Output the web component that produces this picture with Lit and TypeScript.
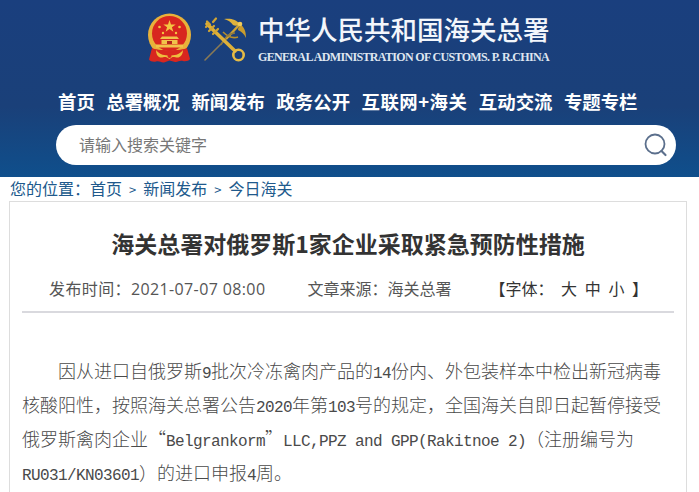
import { LitElement, html, css, svg } from "lit";
import { customElement } from "lit/decorators.js";

const emblem = svg`
<svg class="emblem" width="46" height="50" viewBox="0 0 46 50" aria-hidden="true">
  <circle cx="22.500" cy="22" r="21.500" fill="#e8b13a"/>
  <circle cx="22.500" cy="20.500" r="17.500" fill="#d8261f"/>
  <path d="M22.500 7l1.500 4.500h4.700l-3.800 2.800 1.500 4.500-3.900-2.800-3.900 2.800 1.500-4.500-3.800-2.800h4.700z" fill="#f4c542"/>
  <circle cx="12.500" cy="14" r="1.300" fill="#f4c542"/><circle cx="32.500" cy="14" r="1.300" fill="#f4c542"/>
  <circle cx="16" cy="20" r="1.200" fill="#f4c542"/><circle cx="29" cy="20" r="1.200" fill="#f4c542"/>
  <path d="M13 26h19l-2-2.600H15zM14.500 27h16v4h-16zM9 31.500h27v3H9z" fill="#f1c24a"/>
  <path d="M20 28h5v3h-5z" fill="#b4241c"/>
  <path d="M5 35c5 3 30 3 35 0l3 11c-1 2-4.500 2.500-7 2-4-.8-5 1.500-8 1l-5.500-1.500L17 49.500c-3 .5-4-1.800-8-1-2.500.5-6 0-7-2z" fill="#d8261f"/>
  <path d="M9 37c4 5 9 5.500 13.500 5.500S32 42 36 37c0 4-2 6.500-4.500 7.500-2.500.5-4-1-6-.5L22.500 46 19 44c-2-.5-3.500 1-6 .5C10.500 43.500 9 41 9 37z" fill="#eebc3e"/>
  <circle cx="22.500" cy="43" r="2" fill="#d8261f"/>
</svg>`;

const customs = svg`
<svg class="customs" width="46" height="46" viewBox="0 0 46 46" aria-hidden="true">
  <path d="M2 44L23 23" stroke="#8a7a55" stroke-width="1.600" stroke-linecap="round"/>
  <path d="M23 23L37 8" stroke="#cfa334" stroke-width="2.500"/>
  <path d="M20 16c4 4 9 7 15 5" fill="none" stroke="#b98f2a" stroke-width="1.500"/>
  <path d="M18 29c2-6 8-12 14-12" fill="none" stroke="#8f7a40" stroke-width="1.500"/>
  <path d="M37 8C33 3 27 2 21 3c4 1 7 3 9 6 2 1 5 1 7-1z" fill="#e0b23c"/>
  <path d="M38 9c3 2 5 6 5 13-2-4-4-6-8-8 0-2 1-4 3-5z" fill="#c99c2e"/>
  <circle cx="37" cy="8" r="2.300" fill="#f0ca5a"/>
  <path d="M4 8L32 35" stroke="#deb03a" stroke-width="3.600" stroke-linecap="round"/>
  <path d="M3 11l3-3M7 8.500l-3-3M6 15l5-5M10 18l5-5M10 6l3-3.500" stroke="#d3a533" stroke-width="2.200" stroke-linecap="round"/>
  <circle cx="35.500" cy="39" r="5.200" fill="none" stroke="#e6bb45" stroke-width="2.600"/>
</svg>`;

@customElement("app-root")
export class AppRoot extends LitElement {
  static styles = css`
    :host { display: block; width: 699px; height: 492px; overflow: hidden; background: #fff;
      font-family: "Noto Sans CJK SC", "Noto Sans", sans-serif; }
    .top { height: 177px; box-sizing: border-box; background: linear-gradient(180deg, #1a3f7e 0%, #1a4079 60%, #0f4f8c 100%);
      padding: 12px 23px 0 56px; color: #fff; }
    .brand { display: flex; align-items: flex-start; height: 65px; padding-left: 91px; }
    .emblem { flex: none; margin-top: 1px; }
    .customs { margin: 4px 0 0 10px; flex: none; }
    .names { margin: 0 0 0 9px; display: flex; flex-direction: column; }
    .cn { font-size: 26.500px; line-height: 34px; font-weight: 500; white-space: nowrap; height: 34px; color: #f3f6fb; }
    .en { font-family: "Liberation Serif", serif; font-weight: 700; font-size: 12px; line-height: 16px; margin-top: 3px;
      white-space: nowrap; letter-spacing: -0.660px; color: #dfe6f0; }
    nav { display: flex; gap: 11.500px; margin: 12px 0 0 2px; height: 24px; }
    nav a { font-size: 18.400px; line-height: 24px; font-weight: 700; color: #fff; white-space: nowrap; }
    nav a.wide { letter-spacing: 0.500px; }
    .search { display: flex; align-items: center; height: 40px; margin-top: 12px; background: #fff; border-radius: 20px;
      padding: 0 7px 0 23px; }
    .search input { flex: 1; border: 0; outline: 0; padding: 0 0 2px; background: transparent; font: 16px/24px "Noto Sans CJK SC", sans-serif; color: #777; }
    .search input::placeholder { color: #777; opacity: 1; }
    .crumbs { margin: 0; padding-left: 10px; height: 24px; font-size: 16px; line-height: 22px; color: #20598c; white-space: nowrap; }
    .crumbs span { margin: 0 7px; font-size: 13px; }
    .card { margin-left: 9px; width: 678px; box-sizing: border-box; border: 1px solid #ddd; border-bottom: 0; height: 291px;
      padding: 0 12px; }
    h1 { margin: 25px 0 0; text-align: center; font-size: 23px; line-height: 32px; font-weight: 700; color: #333; }
    .meta { display: flex; height: 38px; margin-top: 11px; padding: 0 0 3px 27px; font-family: "Open Sans", "Noto Sans CJK SC", sans-serif;
      font-size: 16px; line-height: 38px; color: #555; white-space: nowrap; border-bottom: 2px solid #d9d9de; }
    .meta .date { letter-spacing: 0.380px; }
    .meta .src { margin-left: 42px; }
    .meta .size { margin-left: 38px; color: #333; word-spacing: 3.500px; }
    .body { margin: 40px 0 0; font-size: 18px; line-height: 34px; font-weight: 300; color: #4a4a4a; text-indent: 36px; width: 652px;
      font-family: "Noto Sans CJK SC", sans-serif; }
    .body b { font: 300 16px/0 "Liberation Mono", "Noto Sans CJK SC", monospace; letter-spacing: -0.6px; }
  `;

  render() {
    return html`
      <header class="top">
        <div class="brand">
          ${emblem}${customs}
          <div class="names">
            <div class="cn">中华人民共和国海关总署</div>
            <div class="en">GENERAL ADMINISTRATION OF CUSTOMS. P. R.CHINA</div>
          </div>
        </div>
        <nav>
          <a>首页</a><a>总署概况</a><a>新闻发布</a><a>政务公开</a><a class="wide">互联网+海关</a><a>互动交流</a><a>专题专栏</a>
        </nav>
        <div class="search">
          <input placeholder="请输入搜索关键字" />
          <svg width="26" height="26" viewBox="0 0 26 26" aria-hidden="true">
            <circle cx="12" cy="12" r="9.500" fill="none" stroke="#5b6f8c" stroke-width="1.800"/>
            <path d="M18.500 19l4 4" stroke="#5b6f8c" stroke-width="2.200" stroke-linecap="round"/>
          </svg>
        </div>
      </header>
      <p class="crumbs">您的位置：首页<span>&gt;</span>新闻发布<span>&gt;</span>今日海关</p>
      <main class="card">
        <h1>海关总署对俄罗斯1家企业采取紧急预防性措施</h1>
        <div class="meta">
          <span class="date">发布时间：2021-07-07 08:00</span>
          <span class="src">文章来源：海关总署</span>
          <span class="size">【字体： 大 中 小 】</span>
        </div>
        <p class="body">因从进口自俄罗斯<b>9</b>批次冷冻禽肉产品的<b>14</b>份内、外包装样本中检出新冠病毒核酸阳性，按照海关总署公告<b>2020</b>年第<b>103</b>号的规定，全国海关自即日起暂停接受俄罗斯禽肉企业“<b>Belgrankorm</b>”<b>LLC,PPZ and GPP(Rakitnoe 2)</b>（注册编号为<b>RU031/KN03601</b>）的进口申报<b>4</b>周。</p>
      </main>
    `;
  }
}
